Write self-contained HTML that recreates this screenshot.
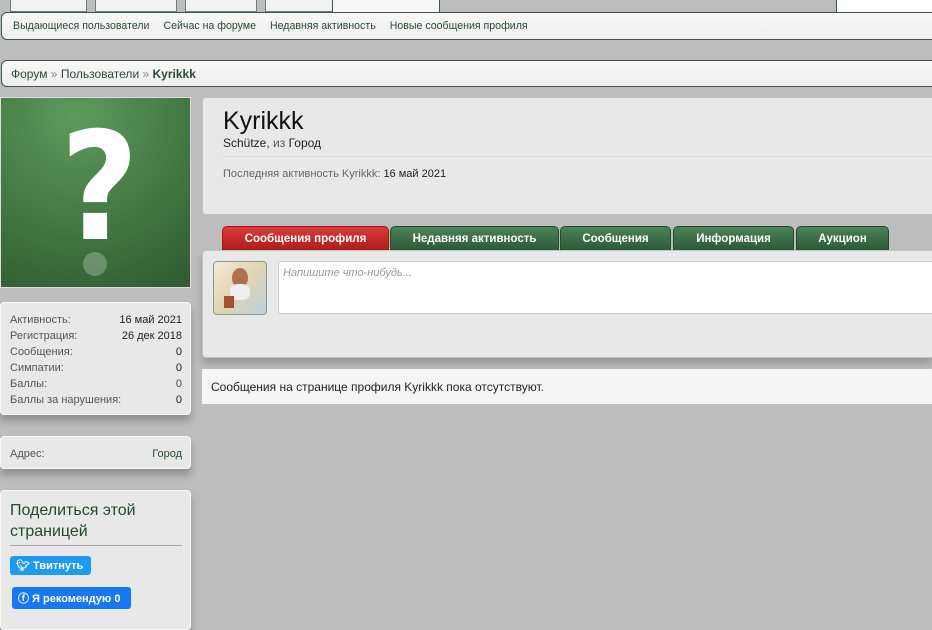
<!DOCTYPE html>
<html><head><meta charset="utf-8"><style>
*{box-sizing:border-box;margin:0;padding:0}
body{width:932px;height:620px;overflow:hidden;background:#bdbdbd;font-family:"Liberation Sans",sans-serif;font-size:11px;color:#222;position:relative}
.a{position:absolute}
.tab0{top:0;height:12px;background:#f2f2f2;border:1px solid #6b7b6e;border-top:none}
.bar{background:linear-gradient(#f7f7f7,#efefef);border:1px solid #3d5a45;border-right:none;border-radius:6px 0 0 6px}
.panel{background:#e8e8e8;border:1px solid #f8f8f8;border-radius:4px;box-shadow:0 6px 8px rgba(0,0,0,.25)}
.row{display:flex;justify-content:space-between;line-height:16px;color:#555}
.row b{font-weight:normal;color:#222}
.t{top:226px;height:25px;color:#fff;font-weight:bold;font-size:11.5px;text-align:center;line-height:24px;border-radius:5px 5px 0 0;background:linear-gradient(#4c8357,#2b5a36);border:1px solid #244a2c}
</style></head><body>
<div class="a tab0" style="left:10px;width:77px"></div>
<div class="a tab0" style="left:95px;width:82px"></div>
<div class="a tab0" style="left:185px;width:72px"></div>
<div class="a tab0" style="left:265px;width:70px"></div>
<div class="a" style="left:332px;top:0;width:108px;height:14px;background:#f6f6f6;border-left:1px solid #3d5a45;border-right:1px solid #3d5a45"></div>
<div class="a" style="left:836px;top:0;width:96px;height:12px;background:#fff;border-left:1px solid #3d5a45"></div>
<div class="a bar" style="left:1px;top:12px;width:931px;height:28px;padding:7px 0 0 11px;color:#2b4a33;font-size:10.6px">
<span>Выдающиеся пользователи</span><span style="margin-left:14px">Сейчас на форуме</span><span style="margin-left:14px">Недавняя активность</span><span style="margin-left:14px">Новые сообщения профиля</span></div>
<div class="a bar" style="left:1px;top:60px;width:931px;height:27px;padding:6px 0 0 9px;font-size:12px;color:#2b4a33">Форум <span style="color:#888">»</span> Пользователи <span style="color:#888">»</span> <b>Kyrikkk</b></div>

<div class="a" style="left:0;top:97px;width:191px;height:191px;background:radial-gradient(circle at 40% 10%,#5e9a5c,#3f7440 60%,#2f5a32);border:1px solid #ddd"></div>
<div class="a" style="left:56px;top:118px;font-size:150px;font-weight:bold;color:#fff;line-height:140px;font-family:'DejaVu Sans',sans-serif;transform:scaleX(.9)">?</div>
<div class="a" style="left:83px;top:252px;width:24px;height:24px;border-radius:50%;background:rgba(255,255,255,.25)"></div>

<div class="a panel" style="left:0;top:302px;width:191px;height:113px;padding:9px 8px 0 9px">
<div class="row">Активность:<b>16 май 2021</b></div>
<div class="row">Регистрация:<b>26 дек 2018</b></div>
<div class="row">Сообщения:<b>0</b></div>
<div class="row">Симпатии:<b>0</b></div>
<div class="row">Баллы:<b style="color:#2b5a36">0</b></div>
<div class="row">Баллы за нарушения:<b>0</b></div>
</div>
<div class="a panel" style="left:0;top:436px;width:191px;height:33px;padding:9px 8px 0 9px"><div class="row">Адрес:<b style="color:#2b4a33">Город</b></div></div>
<div class="a panel" style="left:0;top:490px;width:191px;height:140px;padding:9px 8px 0 9px">
<div style="font-size:16px;color:#234a2b;line-height:21px;border-bottom:1px solid #aaa;padding-bottom:3px">Поделиться этой страницей</div>
<div style="margin-top:10px;display:inline-block;background:#1d9bf0;color:#fff;font-weight:bold;font-size:11px;padding:3px 8px 3px 6px;border-radius:3px">🐦︎ Твитнуть</div><br>
<div style="margin:12px 0 0 2px;display:inline-block;background:#1877f2;color:#fff;font-weight:bold;font-size:11px;padding:3px 10px 3px 6px;border-radius:3px">ⓕ Я рекомендую 0</div>
</div>

<div class="a" style="left:202px;top:97px;width:730px;height:118px;background:#e8e8e8;border:1px solid #bcc8bd;border-right:none;border-radius:4px 0 0 4px;padding:9px 0 0 20px">
<div style="font-size:25px;line-height:28px;color:#111">Kyrikkk</div>
<div style="font-size:12px;color:#222;margin-top:1px">Schütze, <span style="color:#555">из</span> Город</div>
<div style="border-top:1px solid #dadada;margin-top:6px;padding-top:11px;color:#666">Последняя активность Kyrikkk: <span style="color:#222">16 май 2021</span></div>
</div>
<div class="a t" style="left:222px;width:167px;background:linear-gradient(#d83a3a,#b01c1c);border-color:#a01818">Сообщения профиля</div>
<div class="a t" style="left:390px;width:169px">Недавняя активность</div>
<div class="a t" style="left:560px;width:111px">Сообщения</div>
<div class="a t" style="left:673px;width:121px">Информация</div>
<div class="a t" style="left:796px;width:93px">Аукцион</div>
<div class="a" style="left:202px;top:250px;width:730px;height:108px;background:#e8e8e8;border:1px solid #bcc8bd;border-right:none;border-radius:4px 0 0 4px;box-shadow:0 6px 8px rgba(0,0,0,.2)"></div>
<div class="a" style="left:213px;top:261px;width:54px;height:54px;border:1px solid #8a9a8c;border-radius:4px;background:linear-gradient(135deg,#f2ead8,#e0d4b0 50%,#bcd0e0);overflow:hidden"><div style="margin:6px 0 0 18px;width:16px;height:20px;border-radius:50%;background:#b07050"></div><div style="margin:-4px 0 0 16px;width:20px;height:16px;background:#eee;border-radius:40%"></div><div style="margin:-4px 0 0 10px;width:10px;height:12px;background:#a0522d"></div></div>
<div class="a" style="left:278px;top:261px;width:654px;height:53px;background:#fff;border:1px solid #ccc;border-right:none;border-radius:3px 0 0 3px;padding:5px 4px;color:#999;font-style:italic;font-size:11px">Напишите что-нибудь...</div>
<div class="a" style="left:202px;top:369px;width:730px;height:35px;background:#f5f5f5;padding:11px 0 0 9px;font-size:12px;color:#222">Сообщения на странице профиля Kyrikkk пока отсутствуют.</div>
</body></html>
